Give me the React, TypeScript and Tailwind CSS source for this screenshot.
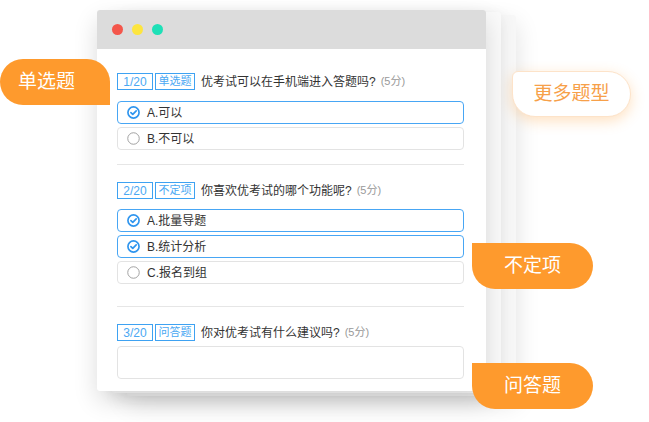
import React from 'react';

const font = { fontFamily: '"Liberation Sans", "Noto Sans CJK SC", sans-serif' };

const CheckedIcon = () => (
  <svg width="13" height="13" viewBox="0 0 14 14" className="shrink-0">
    <circle cx="7" cy="7" r="6" fill="none" stroke="#2f95ee" strokeWidth="1.8" />
    <path d="M4.2 7.2 L6.2 9.1 L9.9 5.2" fill="none" stroke="#2f95ee" strokeWidth="1.8" strokeLinecap="round" strokeLinejoin="round" />
  </svg>
);

const EmptyIcon = () => (
  <svg width="13" height="13" viewBox="0 0 14 14" className="shrink-0">
    <circle cx="7" cy="7" r="6.2" fill="none" stroke="#9a9a9a" strokeWidth="1" />
  </svg>
);

interface OptionProps {
  label: string;
  checked?: boolean;
}

const Option: React.FC<OptionProps> = ({ label, checked }) => (
  <div
    className={`h-[23px] flex items-center gap-[7px] pl-[9px] rounded-[4px] border ${
      checked ? 'border-[#48a6f4]' : 'border-[#e3e3e3]'
    }`}
  >
    {checked ? <CheckedIcon /> : <EmptyIcon />}
    <span className="text-[12px] text-[#333] leading-none">{label}</span>
  </div>
);

interface HeaderProps {
  num: string;
  kind: string;
  text: string;
}

const QuestionHeader: React.FC<HeaderProps> = ({ num, kind, text }) => (
  <div className="flex items-center h-[17px]">
    <span className="w-[36px] h-[17px] flex items-center justify-center border border-[#3ea2f2] text-[#4aa8f3] text-[12px] leading-none">
      {num}
    </span>
    <span className="ml-[2px] w-[40px] h-[17px] flex items-center justify-center border border-[#3ea2f2] text-[#4aa8f3] text-[11px] leading-none">
      {kind}
    </span>
    <span className="ml-[6px] text-[12px] text-[#333] leading-none">{text}</span>
    <span className="ml-[5px] text-[11px] text-[#999] leading-none">(5分)</span>
  </div>
);

const App: React.FC = () => {
  return (
    <div className="relative w-[649px] h-[422px] bg-white overflow-hidden" style={font}>
      {/* stacked cards behind */}
      <div className="absolute left-[127px] top-[15px] w-[389px] h-[381px] bg-[#f7f7f7] rounded-[3px] shadow-[0_8px_24px_rgba(0,0,0,0.12)]" />
      <div className="absolute left-[112px] top-[12px] w-[389px] h-[381px] bg-[#fafafa] rounded-[3px] shadow-[0_4px_16px_rgba(0,0,0,0.08)]" />

      {/* main card */}
      <div className="relative ml-[97px] mt-[10px] w-[389px] h-[381px] bg-white rounded-[3px] shadow-[0_10px_24px_rgba(0,0,0,0.14)] overflow-hidden">
        <div className="h-[39px] bg-[#dcdcdc] flex items-center gap-[9px] pl-[15px]">
          <span className="w-[11px] h-[11px] rounded-full bg-[#f4564b]" />
          <span className="w-[11px] h-[11px] rounded-full bg-[#fde53f]" />
          <span className="w-[11px] h-[11px] rounded-full bg-[#1ee0b7]" />
        </div>

        <div className="pl-[20px] pr-[22px] pt-[24px]">
          <QuestionHeader num="1/20" kind="单选题" text="优考试可以在手机端进入答题吗?" />
          <div className="mt-[11px] flex flex-col gap-[3px]">
            <Option label="A.可以" checked />
            <Option label="B.不可以" />
          </div>

          <div className="mt-[14px] h-px bg-[#e6e6e6]" />

          <div className="mt-[17px]">
            <QuestionHeader num="2/20" kind="不定项" text="你喜欢优考试的哪个功能呢?" />
          </div>
          <div className="mt-[10px] flex flex-col gap-[3px]">
            <Option label="A.批量导题" checked />
            <Option label="B.统计分析" checked />
            <Option label="C.报名到组" />
          </div>

          <div className="mt-[22px] h-px bg-[#e6e6e6]" />

          <div className="mt-[17px]">
            <QuestionHeader num="3/20" kind="问答题" text="你对优考试有什么建议吗?" />
          </div>
          <div className="mt-[5px] h-[33px] rounded-[4px] border border-[#e3e3e3]" />
        </div>
      </div>

      {/* floating tags */}
      <div className="absolute left-0 top-[59px] w-[110px] h-[46px] bg-[#fe9a2d] rounded-[23px] rounded-br-none flex items-center pl-[18px] text-white text-[19px]">
        单选题
      </div>
      <div className="absolute left-[512px] top-[71px] w-[119px] h-[46px] bg-white border border-[#fde3c9] rounded-[23px] rounded-tl-[6px] shadow-[0_4px_14px_rgba(254,154,45,0.3)] flex items-center justify-center text-[#f7a049] text-[19px]">
        更多题型
      </div>
      <div className="absolute left-[472px] top-[243px] w-[121px] h-[46px] bg-[#fe9a2d] rounded-[23px] rounded-tl-none flex items-center justify-center text-white text-[19px]">
        不定项
      </div>
      <div className="absolute left-[472px] top-[363px] w-[121px] h-[46px] bg-[#fe9a2d] rounded-[23px] rounded-tl-none flex items-center justify-center text-white text-[19px]">
        问答题
      </div>
    </div>
  );
};

export default App;
